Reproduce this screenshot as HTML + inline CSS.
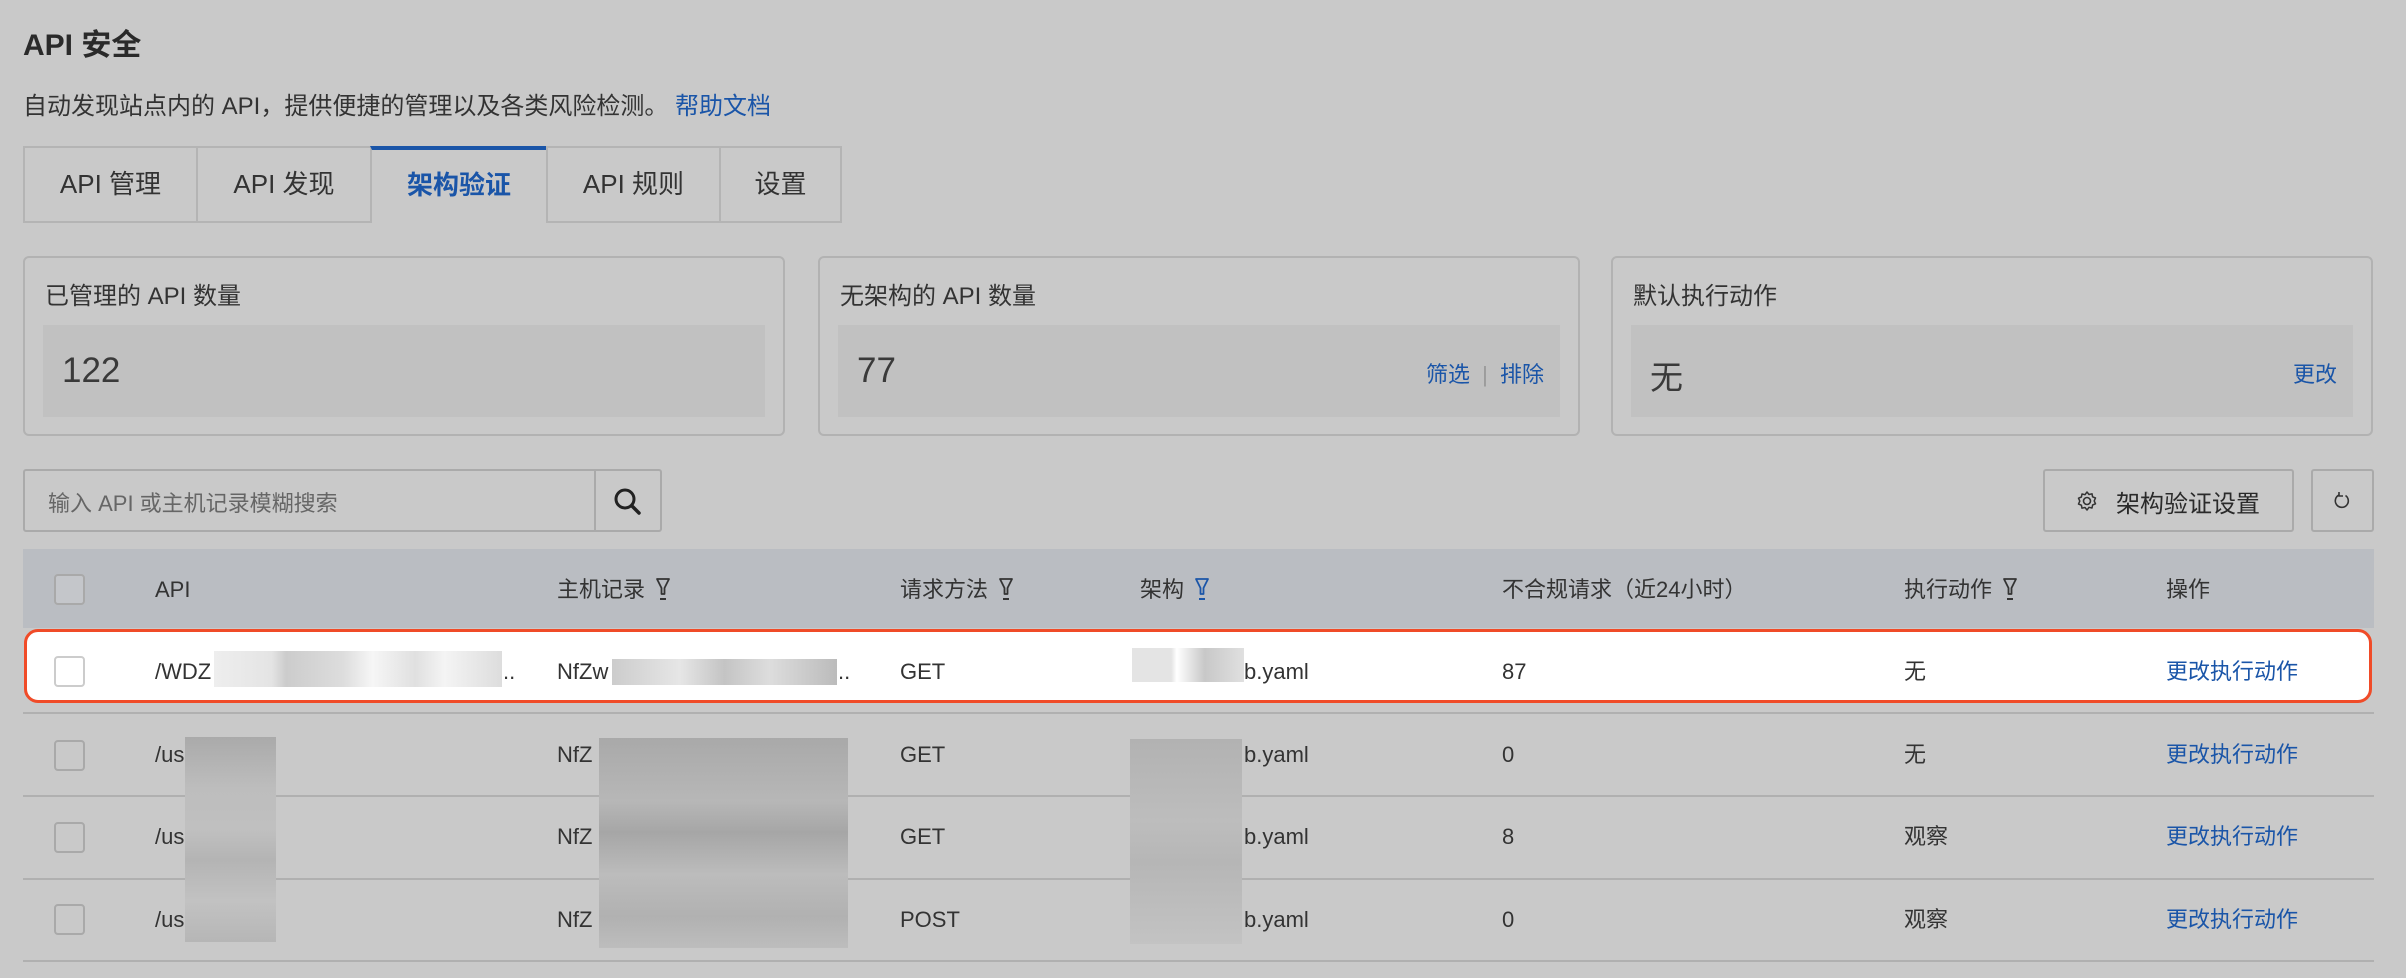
<!DOCTYPE html>
<html><head><meta charset="utf-8"><style>
*{margin:0;padding:0;box-sizing:border-box}
body{width:2406px;height:978px;background:#c9c9c9;font-family:"Liberation Sans","Noto Sans CJK SC",sans-serif;color:#333;position:relative;overflow:hidden}
.a{position:absolute;white-space:nowrap}
.tab{position:absolute;top:146px;height:77px;border:2px solid #b4b4b4;font-size:26px;line-height:73px;text-align:center;color:#333;background:#c9c9c9}
.card{position:absolute;top:256px;height:180px;width:762px;border:2px solid #b2b2b2;border-radius:6px}
.card .t{position:absolute;left:20px;top:18px;font-size:24px;color:#333}
.card .box{position:absolute;left:18px;top:67px;right:18px;height:92px;background:#c1c1c1}
.card .n{position:absolute;left:19px;top:26px;font-size:35px;color:#3a3a3a}
.lk{color:#1a55a8}
.hd{position:absolute;left:23px;top:549px;width:2351px;height:79px;background:#babdc2}
.cb{position:absolute;left:54px;width:31px;height:31px;border:2px solid #a9a9a9;border-radius:4px;background:#c9c9c9}
.sep{position:absolute;left:23px;width:2351px;height:2px;background:#b0b0b0}
.tx{position:absolute;font-size:22px;line-height:26px;white-space:nowrap}
.blk{position:absolute}
.fn{display:inline-block;vertical-align:-4px;margin-left:10px}
</style></head><body>
<div class="a" style="left:23px;top:20px;font-size:30px;font-weight:bold;color:#2a2a2a">API 安全</div>
<div class="a" style="left:23px;top:86px;font-size:24px;color:#333">自动发现站点内的 API，提供便捷的管理以及各类风险检测。 <span class="lk">帮助文档</span></div>

<div class="tab" style="left:23px;width:175px">API 管理</div>
<div class="tab" style="left:196px;width:176px">API 发现</div>
<div class="tab" style="left:370px;width:178px;border-top:4px solid #1a55a8;border-bottom:none;color:#1a55a8;font-weight:bold;line-height:70px">架构验证</div>
<div class="tab" style="left:546px;width:175px">API 规则</div>
<div class="tab" style="left:719px;width:123px">设置</div>

<div class="card" style="left:23px"><div class="t">已管理的 API 数量</div><div class="box"><div class="n">122</div></div></div>
<div class="card" style="left:818px"><div class="t">无架构的 API 数量</div><div class="box"><div class="n">77</div>
<div class="a lk" style="right:16px;top:32px;font-size:22px">筛选 <span style="color:#999;margin:0 6px">|</span> 排除</div></div></div>
<div class="card" style="left:1611px"><div class="t">默认执行动作</div><div class="box"><div class="n" style="font-size:33px">无</div>
<div class="a lk" style="right:16px;top:32px;font-size:22px">更改</div></div></div>

<div class="a" style="left:23px;top:469px;width:639px;height:63px;border:2px solid #aaa;border-radius:3px"></div>
<div class="a" style="left:594px;top:469px;width:2px;height:63px;background:#aaa"></div>
<div class="a" style="left:48px;top:486px;font-size:22px;color:#666">输入 API 或主机记录模糊搜索</div>
<svg class="a" style="left:612px;top:486px" width="32" height="32" viewBox="0 0 32 32"><circle cx="13" cy="13" r="9" fill="none" stroke="#222" stroke-width="3"/><path d="M20 20l7 7" stroke="#222" stroke-width="3.5" stroke-linecap="round"/></svg>

<div class="a" style="left:2043px;top:469px;width:251px;height:63px;border:2px solid #aaa;border-radius:3px"></div>
<svg class="a" style="left:2076px;top:490px" width="22" height="22" viewBox="0 0 22 22"><circle cx="11" cy="11" r="3.5" fill="none" stroke="#333" stroke-width="1.6"/><path d="M11 2l2 2.5 3-.7.6 3 2.9 1.2-1.3 2.9 1.3 2.9-2.9 1.2-.6 3-3-.7L11 20l-2-2.5-3 .7-.6-3L2.5 14l1.3-2.9L2.5 8.2 5.4 7l.6-3 3 .7z" fill="none" stroke="#333" stroke-width="1.5" stroke-linejoin="round"/></svg>
<div class="a" style="left:2116px;top:484px;font-size:24px;color:#2a2a2a">架构验证设置</div>
<div class="a" style="left:2311px;top:469px;width:63px;height:63px;border:2px solid #aaa;border-radius:3px"></div>
<svg class="a" style="left:2331px;top:490px" width="22" height="22" viewBox="0 0 22 22"><path d="M14.5 5.5A6.5 6.5 0 1 1 8 5" fill="none" stroke="#333" stroke-width="1.6"/><path d="M8 2v4h4" fill="none" stroke="#333" stroke-width="1.6"/></svg>

<div class="hd"></div>
<div class="cb" style="top:574px;background:#c4c6ca"></div>
<div class="tx" style="left:155px;top:577px">API</div>
<div class="tx" style="left:557px;top:577px">主机记录<svg class="fn" width="16" height="24" viewBox="0 0 16 24"><path d="M2 2h12l-4.5 9v6h-3v-6z" fill="none" stroke="#333" stroke-width="1.8" stroke-linejoin="round"/><path d="M5 22h6" stroke="#333" stroke-width="2"/></svg></div>
<div class="tx" style="left:900px;top:577px">请求方法<svg class="fn" width="16" height="24" viewBox="0 0 16 24"><path d="M2 2h12l-4.5 9v6h-3v-6z" fill="none" stroke="#333" stroke-width="1.8" stroke-linejoin="round"/><path d="M5 22h6" stroke="#333" stroke-width="2"/></svg></div>
<div class="tx" style="left:1140px;top:577px">架构<svg class="fn" width="16" height="24" viewBox="0 0 16 24"><path d="M2 2h12l-4.5 9v6h-3v-6z" fill="none" stroke="#1a55a8" stroke-width="1.8" stroke-linejoin="round"/><path d="M5 22h6" stroke="#1a55a8" stroke-width="2"/></svg></div>
<div class="tx" style="left:1502px;top:577px">不合规请求（近24小时）</div>
<div class="tx" style="left:1904px;top:577px">执行动作<svg class="fn" width="16" height="24" viewBox="0 0 16 24"><path d="M2 2h12l-4.5 9v6h-3v-6z" fill="none" stroke="#333" stroke-width="1.8" stroke-linejoin="round"/><path d="M5 22h6" stroke="#333" stroke-width="2"/></svg></div>
<div class="tx" style="left:2166px;top:577px">操作</div>

<div class="a" style="left:24px;top:629px;width:2348px;height:74px;background:#fff;border:3px solid #f04b28;border-radius:14px"></div>
<div class="sep" style="top:712px"></div>
<div class="sep" style="top:795px"></div>
<div class="sep" style="top:878px"></div>
<div class="sep" style="top:960px"></div>

<!-- row1 -->
<div class="cb" style="top:656px;background:#fff;border-color:#ccc"></div>
<div class="tx" style="left:155px;top:659px">/WDZ</div>
<div class="blk" style="left:214px;top:651px;width:288px;height:36px;background:linear-gradient(90deg,#eee 0,#e4e4e4 20%,#ccc 25%,#ddd 45%,#f6f6f6 55%,#e0e0e0 70%,#f4f4f4 80%,#ddd 100%)"></div>
<div class="tx" style="left:503px;top:659px">..</div>
<div class="tx" style="left:557px;top:659px">NfZw</div>
<div class="blk" style="left:612px;top:659px;width:225px;height:26px;background:linear-gradient(90deg,#ccc,#e6e6e6 30%,#c4c4c4 50%,#ddd 70%,#bbb)"></div>
<div class="tx" style="left:838px;top:659px">..</div>
<div class="tx" style="left:900px;top:659px">GET</div>
<div class="blk" style="left:1132px;top:648px;width:112px;height:34px;background:linear-gradient(90deg,#e4e4e4 0,#e4e4e4 35%,#fff 40%,#c8c8c8 65%,#e0e0e0 100%)"></div>
<div class="tx" style="left:1244px;top:659px">b.yaml</div>
<div class="tx" style="left:1502px;top:659px">87</div>
<div class="tx" style="left:1904px;top:659px">无</div>
<div class="tx lk" style="left:2166px;top:659px">更改执行动作</div>

<div class="blk" style="left:185px;top:737px;width:91px;height:205px;background:linear-gradient(180deg,#aaa,#bdbdbd 25%,#c0c0c0 45%,#b4b4b4 60%,#c2c2c2 80%,#b6b6b6)"></div>
<div class="blk" style="left:599px;top:738px;width:249px;height:210px;background:linear-gradient(180deg,#a9a9a9,#b7b7b7 30%,#a6a6a6 45%,#bcbcbc 65%,#b1b1b1 85%,#bdbdbd)"></div>
<div class="blk" style="left:1130px;top:739px;width:112px;height:205px;background:linear-gradient(180deg,#b2b2b2,#bdbdbd 40%,#b6b6b6 60%,#c3c3c3)"></div>

<div class="cb" style="top:740px"></div>
<div class="tx" style="left:155px;top:742px">/us</div>
<div class="tx" style="left:557px;top:742px">NfZ</div>
<div class="tx" style="left:900px;top:742px">GET</div>
<div class="tx" style="left:1244px;top:742px">b.yaml</div>
<div class="tx" style="left:1502px;top:742px">0</div>
<div class="tx" style="left:1904px;top:742px">无</div>
<div class="tx lk" style="left:2166px;top:742px">更改执行动作</div>

<div class="cb" style="top:822px"></div>
<div class="tx" style="left:155px;top:824px">/us</div>
<div class="tx" style="left:557px;top:824px">NfZ</div>
<div class="tx" style="left:900px;top:824px">GET</div>
<div class="tx" style="left:1244px;top:824px">b.yaml</div>
<div class="tx" style="left:1502px;top:824px">8</div>
<div class="tx" style="left:1904px;top:824px">观察</div>
<div class="tx lk" style="left:2166px;top:824px">更改执行动作</div>

<div class="cb" style="top:904px"></div>
<div class="tx" style="left:155px;top:907px">/us</div>
<div class="tx" style="left:557px;top:907px">NfZ</div>
<div class="tx" style="left:900px;top:907px">POST</div>
<div class="tx" style="left:1244px;top:907px">b.yaml</div>
<div class="tx" style="left:1502px;top:907px">0</div>
<div class="tx" style="left:1904px;top:907px">观察</div>
<div class="tx lk" style="left:2166px;top:907px">更改执行动作</div>
</body></html>
